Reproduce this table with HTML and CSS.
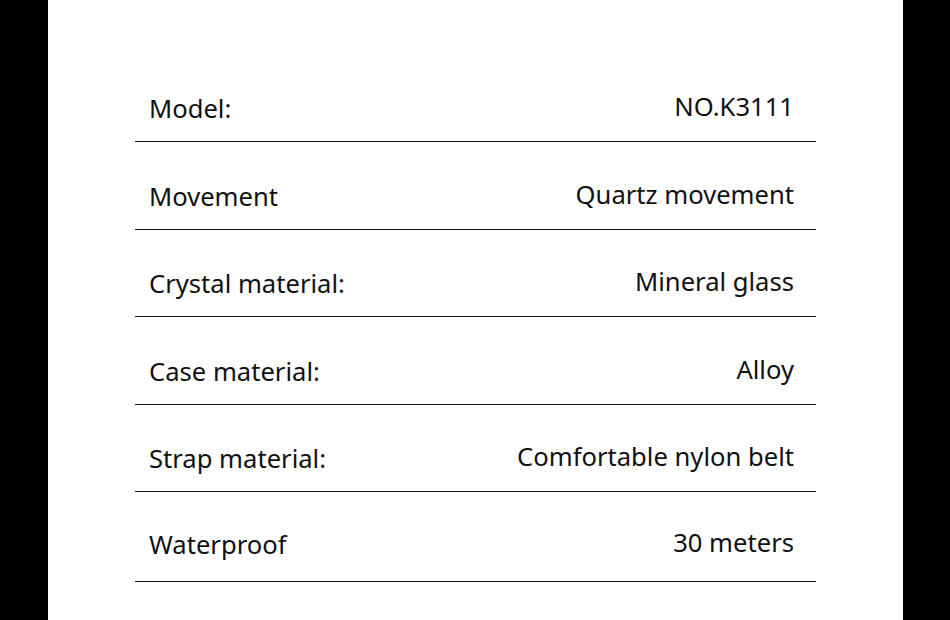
FILE: index.html
```html
<!DOCTYPE html>
<html>
<head>
<meta charset="utf-8">
<link rel="stylesheet" href="styles.css">
</head>
<body>
<div class="page">
  <div class="side"></div>
  <main class="content">
    <div class="specs">
      <div class="row"><span class="label">Model:</span><span class="value">NO.K3111</span></div>
      <div class="row"><span class="label">Movement</span><span class="value">Quartz movement</span></div>
      <div class="row"><span class="label">Crystal material:</span><span class="value">Mineral glass</span></div>
      <div class="row"><span class="label">Case material:</span><span class="value">Alloy</span></div>
      <div class="row"><span class="label">Strap material:</span><span class="value">Comfortable nylon belt</span></div>
      <div class="row last"><span class="label">Waterproof</span><span class="value">30 meters</span></div>
    </div>
  </main>
  <div class="side right"></div>
</div>
</body>
</html>
```
FILE: styles.css
```css
html, body {
  margin: 0;
  padding: 0;
  background: #000;
}
.page {
  display: flex;
  width: 950px;
  height: 620px;
  overflow: hidden;
}
.side {
  width: 48px;
  flex: none;
  background: #000;
}
.side.right {
  width: 47px;
}
.content {
  flex: 1;
  background: #fff;
  padding: 55px 0 0 87px;
  box-sizing: border-box;
}
.specs {
  width: 681px;
  display: flex;
  flex-direction: column;
}
.row {
  height: 87.4px;
  box-sizing: border-box;
  border-bottom: 1px solid #111;
  display: flex;
  justify-content: space-between;
  align-items: flex-end;
  padding: 0 22px 0 14px;
  font-family: "Noto Sans", sans-serif;
  font-size: 25.6px;
  line-height: 30px;
  color: #111;
}
.row.last {
  height: 89.6px;
}
.label {
  padding-bottom: 17px;
}
.value {
  padding-bottom: 19px;
}
.row.last .label {
  padding-bottom: 21px;
}
.row.last .value {
  padding-bottom: 23px;
}
```
